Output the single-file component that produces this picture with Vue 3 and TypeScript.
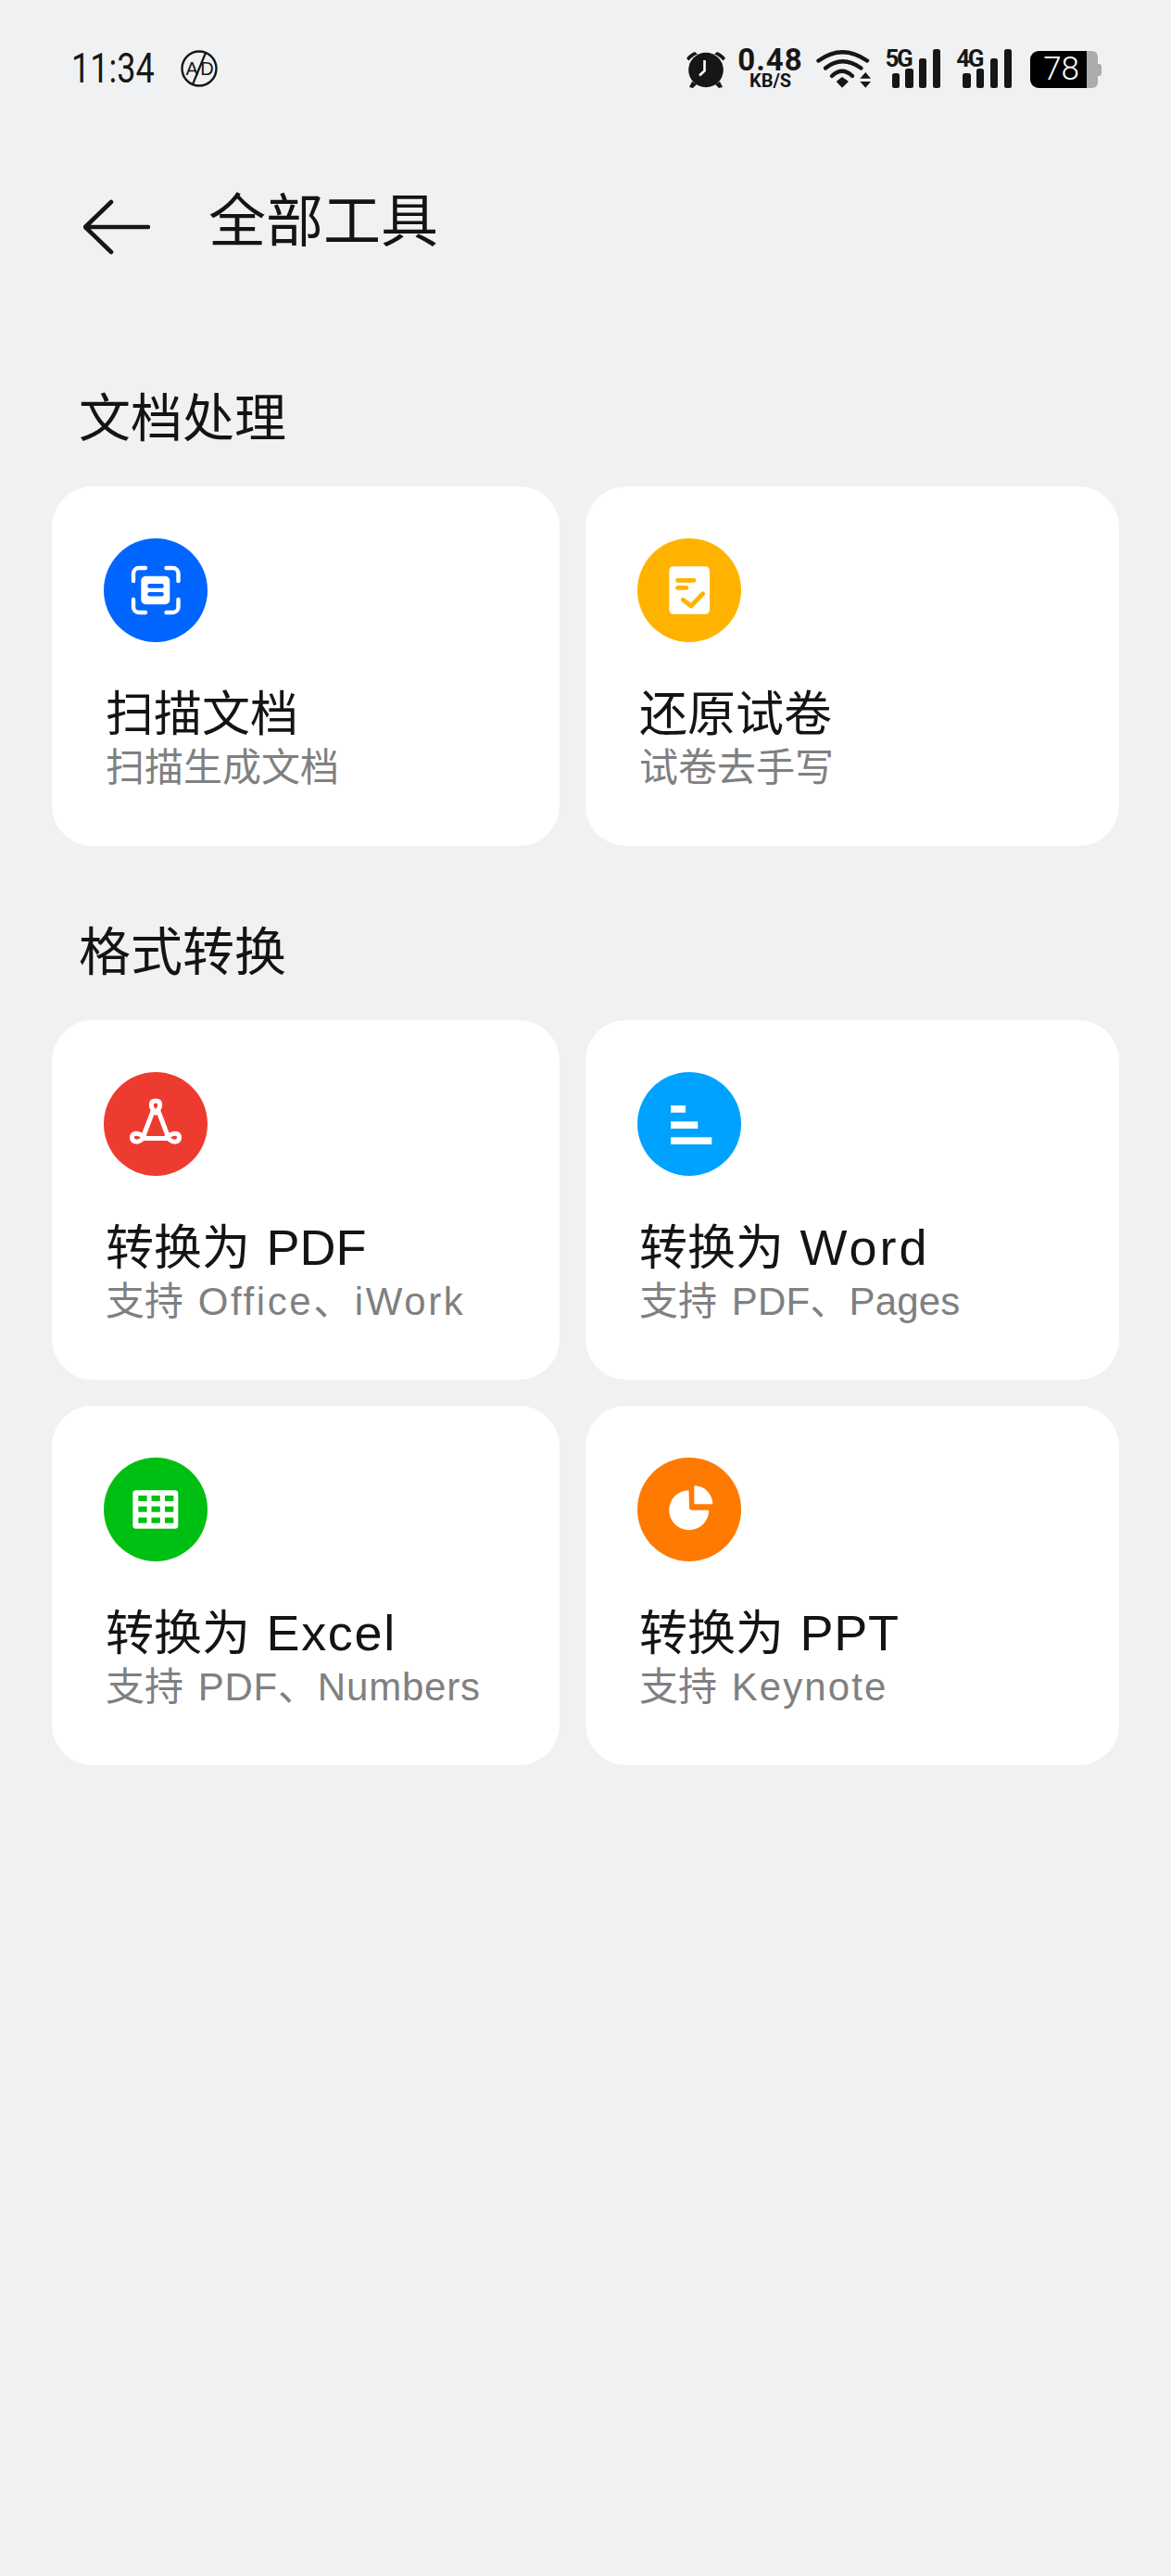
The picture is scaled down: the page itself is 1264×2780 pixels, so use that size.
<script setup lang="ts">
type Kind = 'scan' | 'paper' | 'pdf' | 'word' | 'excel' | 'ppt'
interface Tool {
  title: string
  titleEn?: string
  titleSpacing?: number
  sub: string
  subEn?: string
  subSpacing?: number
  kind: Kind
}
interface Section { name: string; tools: Tool[] }

const sections: Section[] = [
  {
    name: '文档处理',
    tools: [
      { title: '扫描文档', sub: '扫描生成文档', kind: 'scan' },
      { title: '还原试卷', sub: '试卷去手写', kind: 'paper' },
    ],
  },
  {
    name: '格式转换',
    tools: [
      { title: '转换为 ', titleEn: 'PDF', titleSpacing: 0, sub: '支持 ', subEn: 'Office、iWork', subSpacing: 2.6, kind: 'pdf' },
      { title: '转换为 ', titleEn: 'Word', titleSpacing: 3, sub: '支持 ', subEn: 'PDF、Pages', subSpacing: 0.2, kind: 'word' },
      { title: '转换为 ', titleEn: 'Excel', titleSpacing: 1.7, sub: '支持 ', subEn: 'PDF、Numbers', subSpacing: 0.8, kind: 'excel' },
      { title: '转换为 ', titleEn: 'PPT', titleSpacing: 0.8, sub: '支持 ', subEn: 'Keynote', subSpacing: 2.1, kind: 'ppt' },
    ],
  },
]

const barHeights = [15.7, 21, 31.7, 42.3]
const cellX = [37.3, 51.5, 66]
const cellY = [41, 52.7, 64.7]
</script>

<template>
  <div class="page">
    <div class="status">
      <div class="status-left">
        <span class="time"><span class="time-inner">11:34</span></span>
        <svg class="ad" width="42" height="42" viewBox="0 0 42 42">
          <circle cx="21" cy="21" r="18.5" fill="none" stroke="#161616" stroke-width="2.4" />
          <text x="21" y="28" text-anchor="middle" class="ad-text">A D</text>
          <path d="M28 4 L14 38" stroke="#161616" stroke-width="2.2" />
        </svg>
      </div>
      <div class="status-right">
        <svg class="alarm" width="44" height="44" viewBox="0 0 44 44">
          <path d="M1 11 C3 8 6 5.500 10 4 L13 6.500 C9 8 6 10.500 3.500 13.500 Z" fill="#161616" />
          <path d="M43 11 C41 8 38 5.500 34 4 L31 6.500 C35 8 38 10.500 40.500 13.500 Z" fill="#161616" />
          <circle cx="22" cy="23.500" r="18.800" fill="#161616" />
          <path d="M7 36 L4 42 L8 43 L12 39 Z M37 36 L40 42 L36 43 L32 39 Z" fill="#161616" />
          <path d="M20.500 13 V24.500 L15 29.500" fill="none" stroke="#fff" stroke-width="2.600" />
        </svg>
        <div class="speed">
          <span class="speed-num">0.48</span>
          <span class="speed-unit">KB/S</span>
        </div>
        <svg class="wifi" width="60" height="42" viewBox="0 0 60 42">
          <g fill="none" stroke="#161616" stroke-width="4.400" stroke-linecap="round">
            <path d="M2.500 12.500 Q28 -6 55 12.500" />
            <path d="M10 20.500 Q28 6 48.500 20.500" />
            <path d="M17 29 Q28 18.500 39 29" />
          </g>
          <path d="M21.700 35 L28 30 L35 35 L28 41.700 Z M47.300 31.700 L53.300 25 L59 31.700 Z M47.300 35 H59 L53.300 41.700 Z" fill="#161616" />
        </svg>
        <div class="signal signal-5g">
          <span class="net">5G</span>
          <span v-for="h in barHeights" :key="h" class="bar" :style="{ height: h + 'px' }"></span>
        </div>
        <div class="signal signal-4g">
          <span class="net">4G</span>
          <span v-for="h in barHeights" :key="h" class="bar" :style="{ height: h + 'px' }"></span>
        </div>
        <div class="battery">
          <div class="battery-fill">78</div>
          <div class="battery-rest"></div>
          <div class="battery-nub"></div>
        </div>
      </div>
    </div>

    <header class="header">
      <svg class="back" width="72" height="60" viewBox="0 0 72 60">
        <path d="M30 3 L2 30 L30 57 M2 30 H70" fill="none" stroke="#161616" stroke-width="4.600" stroke-linecap="round" stroke-linejoin="round" />
      </svg>
      <h1 class="page-title">全部工具</h1>
    </header>

    <section v-for="section in sections" :key="section.name" class="section">
      <h2 class="section-title">{{ section.name }}</h2>
      <div class="grid">
        <div v-for="tool in section.tools" :key="tool.kind" class="card">
          <svg class="icon" width="112" height="112" viewBox="0 0 112 112">
            <template v-if="tool.kind === 'scan'">
              <circle cx="56" cy="56" r="56" fill="#0066ff" />
              <rect x="40.300" y="40.700" width="31" height="30.600" rx="5" fill="#fff" />
              <rect x="47.300" y="49" width="17.400" height="4.700" rx="2" fill="#0066ff" />
              <rect x="47.300" y="58" width="17.400" height="4.500" rx="2" fill="#0066ff" />
              <path d="M32 46 V38 a6 6 0 0 1 6-6 H45 M80.500 46 V38 a6 6 0 0 0-6-6 H67.500 M32 66 V74 a6 6 0 0 0 6 6 H45 M80.500 66 V74 a6 6 0 0 1-6 6 H67.500" fill="none" stroke="#fff" stroke-width="4.400" stroke-linecap="round" />
            </template>
            <template v-else-if="tool.kind === 'paper'">
              <circle cx="56" cy="56" r="56" fill="#ffb300" />
              <rect x="34.300" y="30.300" width="43.700" height="51.400" rx="4.500" fill="#fff" />
              <path d="M43.500 45.300 H61 M43.500 53.300 H53 M49.300 66.300 L58 73 L70.700 59.700" fill="none" stroke="#ffb300" stroke-width="4.800" stroke-linecap="round" stroke-linejoin="round" />
            </template>
            <template v-else-if="tool.kind === 'pdf'">
              <circle cx="56" cy="56" r="56" fill="#ee3b2f" />
              <g fill="none" stroke="#fff" stroke-width="5" stroke-linejoin="round" stroke-linecap="round">
                <path d="M56 44 C49.500 37.500 50 31 56 31 C62 31 62.500 37.500 56 44 Z" />
                <path d="M46 71.500 C37 64.500 30.500 65 30.500 70.500 C30.500 76 37 76.500 41.500 72.500 L53.500 41" />
                <path d="M66 71.500 C75 64.500 81.500 65 81.500 70.500 C81.500 76 75 76.500 70.500 72.500 L58.500 41" />
                <path d="M45 71.500 H67" />
              </g>
            </template>
            <template v-else-if="tool.kind === 'word'">
              <circle cx="56" cy="56" r="56" fill="#00a2ff" />
              <rect x="36" y="36" width="16" height="7.700" fill="#fff" />
              <rect x="36" y="53.300" width="29.300" height="7.700" fill="#fff" />
              <rect x="36" y="70.300" width="44.300" height="7.700" fill="#fff" />
            </template>
            <template v-else-if="tool.kind === 'excel'">
              <circle cx="56" cy="56" r="56" fill="#00bf13" />
              <rect x="31.300" y="35.300" width="49" height="41.400" rx="3.500" fill="#fff" />
              <template v-for="y in cellY" :key="y">
                <rect v-for="x in cellX" :key="x" :x="x" :y="y" width="9.300" height="6" fill="#00bf13" />
              </template>
            </template>
            <template v-else>
              <circle cx="56" cy="56" r="56" fill="#ff7a00" />
              <path d="M55.500 35.200 A21.500 21.500 0 1 0 77.200 56.700 H59 a3 3 0 0 1-3-3 Z" fill="#fff" />
              <path d="M61.300 30.300 A20 20 0 0 1 81.300 50.300 H62.800 a1.500 1.500 0 0 1-1.500-1.500 Z" fill="#fff" />
            </template>
          </svg>
          <div class="card-title">{{ tool.title }}<span v-if="tool.titleEn" class="title-en" :style="{ letterSpacing: tool.titleSpacing + 'px' }">{{ tool.titleEn }}</span></div>
          <div class="card-sub">{{ tool.sub }}<span v-if="tool.subEn" class="sub-en" :style="{ letterSpacing: tool.subSpacing + 'px' }">{{ tool.subEn }}</span></div>
        </div>
      </div>
    </section>
  </div>
</template>

<style>
html,
body {
  background: #f0f1f3;
}
</style>

<style scoped>
.page {
  min-height: 2780px;
  box-sizing: border-box;
  background: #f0f1f3;
  color: #141414;
  font-family: "Liberation Sans", "Noto Sans CJK SC", sans-serif;
  overflow: hidden;
}

.status {
  display: flex;
  justify-content: space-between;
  align-items: flex-start;
  padding: 52px 75px 0 77px;
  height: 44px;
}
.status-left {
  display: flex;
  align-items: center;
  height: 44px;
}
.time {
  width: 117px;
  display: block;
  white-space: nowrap;
  height: 44px;
}
.time-inner {
  display: inline-block;
  font-family: Roboto, sans-serif;
  font-weight: 400;
  font-size: 45px;
  line-height: 44px;
  transform: scaleX(0.8);
  transform-origin: left center;
  color: #161616;
}
.ad-text {
  font-family: "Liberation Sans", sans-serif;
  font-size: 20px;
  fill: #161616;
  letter-spacing: -1px;
}
.status-right {
  display: flex;
  align-items: flex-start;
  height: 44px;
}
.alarm {
  display: block;
}
.speed {
  margin-left: 14px;
  width: 68px;
  display: flex;
  flex-direction: column;
  align-items: center;
  font-family: Roboto, sans-serif;
  font-weight: 700;
  color: #161616;
}
.speed-num {
  font-size: 33px;
  line-height: 26px;
  letter-spacing: 1px;
}
.speed-unit {
  font-size: 20px;
  line-height: 18px;
}
.wifi {
  margin-left: 15px;
  margin-top: 1px;
  display: block;
}
.signal {
  position: relative;
  display: flex;
  align-items: flex-end;
  gap: 6.4px;
  height: 43px;
  padding-left: 7px;
}
.signal-5g {
  margin-left: 15px;
}
.signal-4g {
  margin-left: 17px;
}
.net {
  position: absolute;
  left: 0;
  top: -4px;
  font-family: Roboto, sans-serif;
  font-weight: 700;
  font-size: 26px;
  line-height: 30px;
  letter-spacing: -2.5px;
  color: #161616;
}
.bar {
  width: 8.4px;
  border-radius: 2.5px;
  background: #161616;
}
.battery {
  margin-left: 20px;
  margin-top: 3px;
  display: flex;
  align-items: center;
}
.battery-fill {
  box-sizing: border-box;
  width: 61px;
  height: 40px;
  background: #000;
  border-radius: 9px 0 0 9px;
  color: #fff;
  font-family: Roboto, sans-serif;
  font-weight: 300;
  font-size: 35px;
  line-height: 40px;
  text-align: right;
  padding-right: 8px;
}
.battery-rest {
  width: 12px;
  height: 40px;
  background: #ababab;
  border-radius: 0 6px 6px 0;
}
.battery-nub {
  width: 4px;
  height: 13px;
  background: #ababab;
  border-radius: 0 3px 3px 0;
}

.header {
  display: flex;
  align-items: flex-start;
  height: 315px;
  padding-left: 90px;
  box-sizing: border-box;
  padding-top: 106px;
}
.back {
  margin-top: 13px;
  display: block;
}
.page-title {
  margin: 2px 0 0 63px;
  font-size: 62px;
  line-height: 72px;
  font-weight: 400;
}

.section {
  margin-bottom: 74px;
}
.section-title {
  margin: 0 0 35px 85px;
  padding-top: 3px;
  font-size: 56px;
  line-height: 76px;
  font-weight: 400;
}
.grid {
  display: grid;
  grid-template-columns: 548px 576px;
  gap: 28px;
  padding-left: 56px;
}
.card {
  box-sizing: border-box;
  height: 388px;
  padding: 56px 0 56px 56px;
  background: #fff;
  border-radius: 44px;
}
.icon {
  display: block;
}
.card-title {
  height: 60px;
  margin-top: 48px;
  margin-left: 2px;
  font-size: 52px;
  line-height: 60px;
  color: #141414;
  white-space: nowrap;
}
.title-en {
  font-size: 54px;
  line-height: 0;
  margin-left: 3px;
}
.card-sub {
  height: 56px;
  margin-left: 2px;
  font-size: 42px;
  line-height: 56px;
  color: #808080;
  white-space: nowrap;
}
.sub-en {
  line-height: 0;
  margin-left: 4px;
}
</style>
